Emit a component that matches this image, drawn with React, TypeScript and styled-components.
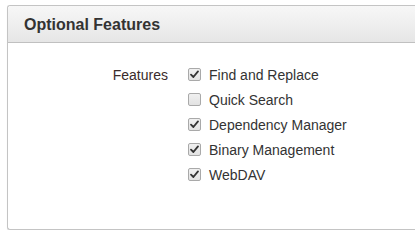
import React from "react";
import styled, { createGlobalStyle } from "styled-components";

const GlobalStyle = createGlobalStyle`
    html, body {
        margin: 0;
        padding: 0;
        background: #ffffff;
        overflow: hidden;
    }
    body {
        font-family: "Liberation Sans", Arial, sans-serif;
        color: #333333;
    }
`;

interface IFeature {
    name: string;
    checked: boolean;
}

const features: IFeature[] = [
    { name: "Find and Replace", checked: true },
    { name: "Quick Search", checked: false },
    { name: "Dependency Manager", checked: true },
    { name: "Binary Management", checked: true },
    { name: "WebDAV", checked: true },
];

const Page = styled.div`
    width: 415px;
    padding: 5px 0 0 7px;
    box-sizing: border-box;
`;

const Panel = styled.section`
    width: 100%;
    height: 225px;
    display: flex;
    flex-direction: column;
    border: 1px solid #c4c4c4;
    border-right: none;
    border-radius: 3px 0 0 3px;
    box-sizing: border-box;
    background-color: white;
    box-shadow: 0 1px 1px rgba(0, 0, 0, 0.08);
`;

const PanelHeader = styled.header`
    height: 37px;
    padding: 1px 0 0 16px;
    box-sizing: border-box;
    display: flex;
    align-items: center;
    background: linear-gradient(to bottom, #f7f7f7, #e6e6e6);
    border-bottom: 1px solid #c0c0c0;
    border-radius: 3px 0 0 0;
`;

const Title = styled.h2`
    margin: 0;
    font-size: 16px;
    font-weight: bold;
    color: #333333;
`;

const PanelBody = styled.div`
    padding: 19px 0 0 0;
    display: grid;
    grid-template-columns: 160px auto;
    column-gap: 20px;
    align-items: start;
`;

const Label = styled.span`
    height: 25px;
    display: flex;
    align-items: center;
    justify-content: flex-end;
    font-size: 14px;
    color: #3a2b2b;
`;

const List = styled.div`
    display: flex;
    flex-direction: column;
`;

const Row = styled.label`
    height: 25px;
    display: flex;
    align-items: center;
    gap: 8px;
    font-size: 14px;
    color: #333333;
`;

const Box = styled.span`
    width: 13px;
    height: 13px;
    box-sizing: border-box;
    border: 1px solid #a9a9a9;
    border-radius: 2px;
    background: linear-gradient(to bottom, #f0f0f0, #e2e2e2);
    display: flex;
    align-items: center;
    justify-content: center;
`;

const Check: React.FC<{ checked: boolean }> = ({ checked }) => (
    <Box>
        {checked && (
            <svg width="9" height="9" viewBox="0 0 9 9">
                <path
                    d="M1 4.6 L3.4 7 L8 1.4"
                    fill="none"
                    stroke="#333333"
                    strokeWidth="1.8"
                    strokeLinecap="round"
                    strokeLinejoin="round"
                />
            </svg>
        )}
    </Box>
);

const App: React.FC = () => {
    return (
        <Page>
            <GlobalStyle />
            <Panel>
                <PanelHeader>
                    <Title>Optional Features</Title>
                </PanelHeader>
                <PanelBody>
                    <Label>Features</Label>
                    <List>
                        {features.map((f) => (
                            <Row key={f.name}>
                                <Check checked={f.checked} />
                                {f.name}
                            </Row>
                        ))}
                    </List>
                </PanelBody>
            </Panel>
        </Page>
    );
};

export default App;
